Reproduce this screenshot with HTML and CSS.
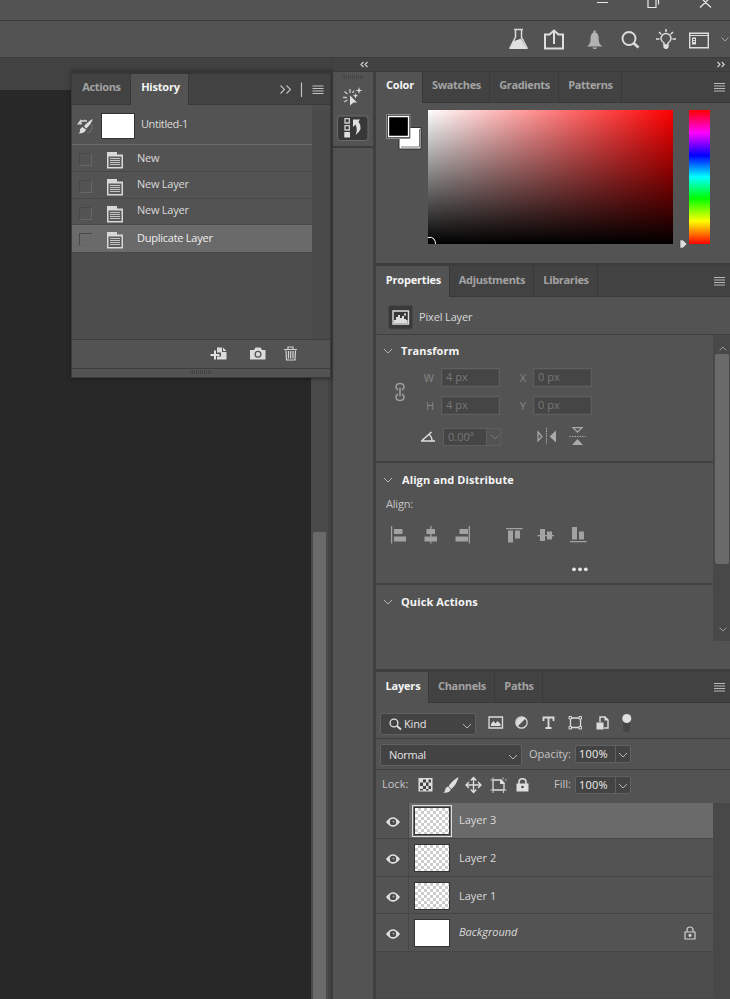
FILE: index.html
```
<!DOCTYPE html>
<html lang="en">
<head>
<meta charset="utf-8">
<title>Untitled-1</title>
<link rel="stylesheet" href="styles.css">
</head>
<body>
<svg class="defs" aria-hidden="true">
  <symbol id="menu" viewBox="0 0 11 9"><path d="M0 .5h11M0 3h11M0 5.5h11M0 8h11" stroke="#b8b8b8" stroke-width="1.2"/></symbol>
  <symbol id="down" viewBox="0 0 10 6"><path d="M1 1l4 4 4-4" fill="none" stroke="#b4b4b4" stroke-width="1"/></symbol>
  <symbol id="doc" viewBox="0 0 16 18"><path d="M0 1h10v2.500H16v14H0V1z" fill="#d8d8d8"/><path d="M1.500 5.500h13v10.500h-13z" fill="#5b5b5b"/><path d="M3 7.500h10M3 9.500h10M3 11.500h10M3 13.500h10" stroke="#c4c4c4"/></symbol>
  <symbol id="eye" viewBox="0 0 14 10"><path d="M0 5Q3.500.2 7 .2T14 5Q10.500 9.800 7 9.800T0 5z" fill="#e2e2e2"/><circle cx="7" cy="4.900" r="3.200" fill="#4b4b4b"/><circle cx="7.500" cy="4.400" r="1" fill="#a0a0a0"/></symbol>
</svg>
<div class="app">
  <header class="titlebar">
    <svg width="140" height="20" viewBox="590 0 140 20" fill="none" stroke="#e8e8e8" stroke-width="1.200"><path d="M597 2.500h11M648 -1v8.500h8V-1M651 -1h7.500V4.500M700 -3l11 10.500M711 -3l-11 10.500"/></svg>
  </header>
  <div class="options">
    <svg width="36" height="36" viewBox="500 21 36 36"><path d="M514 29.500h9M515.500 30v7l-5.500 11h17l-5.500-11v-7" fill="none" stroke="#d8d8d8" stroke-width="1.500"/><path d="M513 41.500l8-3 6 10.500h-17z" fill="#e0e0e0"/></svg>
    <svg width="38" height="36" viewBox="536 21 38 36" fill="none" stroke="#dedede" stroke-width="2"><path d="M550 34.500h-5V48.500h18V34.500h-5M554 44V31M549.500 34.500l4.500-4 4.500 4"/></svg>
    <svg width="38" height="36" viewBox="574 21 38 36" fill="#b2b2b2"><path d="M587 46.500q3.500-2.500 3.500-7 0-6.500 3-7V30.500h2.200v2q3 .5 3 7 0 4.500 3.800 7z"/><path d="M592.500 47.500h4.500l-1 1.500h-2.500z"/></svg>
    <svg width="36" height="36" viewBox="612 21 36 36" fill="none" stroke="#dedede" stroke-width="1.900"><circle cx="629" cy="38.500" r="6.500"/><path d="M633.500 43l5 4.500" stroke-width="2.600"/></svg>
    <svg width="36" height="36" viewBox="648 21 36 36" fill="none" stroke="#dedede" stroke-width="1.500"><path d="M664 45v-2q-3-2-3-4.500a5 5 0 0 1 10 0q0 2.500-3 4.500v2zM666 29v3M656 39h3.500M672.500 39h3.500M659 32l2.300 2.200M673 32l-2.300 2.200"/><path d="M663.500 45h5v2.500l-1.500 1.500h-2l-1.500-1.500z" fill="#dedede" stroke="none"/></svg>
    <svg width="30" height="36" viewBox="684 21 30 36" fill="none" stroke="#dedede" stroke-width="1.400"><path d="M689.700 33.200h18.600v14.600h-18.600z"/><path d="M690 35.500h18" stroke-width="1"/><path d="M692 37.500h4v7h-4z" fill="#dedede" stroke="none"/><path d="M693 39.500h2M693 41.500h2" stroke="#555" stroke-width="1"/></svg>
    <svg width="16" height="36" viewBox="714 21 16 36" fill="none" stroke="#a0a0a0"><path d="M721.500 37.500l3.500 3.500 3.500-3.500"/></svg>
  </div>
  <main class="work">
    <section class="document">
      <div class="doc-tabs"></div>
      <div class="doc-body"><div class="canvas"></div><div class="doc-scroll"><div class="doc-thumb"></div></div></div>
      <div class="history">
        <div class="history-top"></div>
        <div class="tabs">
          <span class="tab t-actions">Actions</span><span class="tab on t-history">History</span>
          <svg class="history-tools" width="52" height="30" viewBox="275 74 52 30" fill="none" stroke="#c2c2c2"><path d="M280.500 85.500l4 4-4 4M286.500 85.500l4 4-4 4" stroke-width="1.100"/><path d="M301.500 82.500v14.500M312.500 86h11M312.500 88.500h11M312.500 91h11M312.500 93.500h11" stroke-width="1.200"/></svg>
        </div>
        <div class="history-body">
          <div class="history-list">
            <div class="snapshot">
              <svg width="29" height="39" viewBox="72 105 29 39"><path d="M77 124.500l4-5.500 1 5.500zM81 120.500q4-1.500 6 0" fill="#d0d0d0"/><path d="M80.500 121h6.500" stroke="#d0d0d0" stroke-width="1.500"/><path d="M93 119q-6 3-9 7.500l2.500 2q4.500-4 6.500-9.500z" fill="#dcdcdc"/><path d="M82.500 127l3.500 2.500q-1 4-7.500 4 2-1.500 1.500-3.500 0-2 2.500-3z" fill="#dcdcdc"/><path d="M92 125q1 6-5 8" fill="none" stroke="#aaa" stroke-dasharray="1 1.500"/></svg>
              <div class="snap-thumb"></div><span class="lbl">Untitled-1</span>
            </div>
            <div class="state first"><i class="check"></i><svg class="docicon"><use href="#doc"/></svg><span class="lbl">New</span></div>
            <div class="state"><i class="check"></i><svg class="docicon"><use href="#doc"/></svg><span class="lbl">New Layer</span></div>
            <div class="state short"><i class="check"></i><svg class="docicon"><use href="#doc"/></svg><span class="lbl">New Layer</span></div>
            <div class="state active"><i class="check"></i><svg class="docicon"><use href="#doc"/></svg><span class="lbl">Duplicate Layer</span></div>
          </div>
          <div class="history-scroll"></div>
        </div>
        <div class="history-foot">
          <svg width="130" height="27" viewBox="200 340 130 27"><path d="M217 347.500h5v4.500h4.500v7.500H217v-3h4v-4h-4z" fill="#dcdcdc"/><path d="M223 347.500l3.500 3.500H223z" fill="#dcdcdc"/><path d="M210.500 355h9M215 350.500v9" stroke="#e2e2e2" stroke-width="2"/><path d="M250 350h4l1.500-2.500h5L262 350h3.500v9.500H250z" fill="#dcdcdc"/><circle cx="258" cy="354.300" r="2.900" fill="none" stroke="#535353" stroke-width="1.300"/><path d="M284 349.500h13M288 349v-2h5v2M286 350.500l.5 9.500h8.500l.5-9.500M288.500 351v7.500M290.700 351v7.500M293 351v7.500" fill="none" stroke="#d2d2d2" stroke-width="1.200"/></svg>
        </div>
        <div class="grip"><i></i></div>
      </div>
    </section>
    <section class="dock">
      <div class="dock-head">
        <svg width="398" height="13" viewBox="332 58 398 13" fill="none" stroke="#d0d0d0" stroke-width="1.200"><path d="M363.500 62l-2.500 2.500 2.500 2.500M367.500 62l-2.500 2.500 2.500 2.500M717.500 62l2.500 2.500-2.500 2.500M721.700 62l2.500 2.500-2.500 2.500"/></svg>
      </div>
      <div class="dock-cols">
        <aside class="strip">
          <div class="strip-group">
            <svg width="40" height="74" viewBox="333 72 40 74"><path d="M342 77h22" stroke="#444" stroke-width="4" stroke-dasharray="1 1"/><path d="M350 95.500l7 7h-3.500l-3.500 3z" fill="#e0e0e0"/><path d="M343 97.500h4M344 102l3.500-2M344.500 91.500l3 2.500M350 89v4M354 90.500l-1.500 2.500" stroke="#c4c4c4" stroke-width="1.400"/><path d="M359 87l.8 2.700 2.700.8-2.700.8-.8 2.700-.8-2.700-2.700-.8 2.700-.8zM355.500 93l.7 2 2 .7-2 .7-.7 2-.7-2-2-.7 2-.7z" fill="#dcdcdc"/><rect x="337.500" y="116" width="30.500" height="24.500" rx="3" fill="#383838" stroke="#6c6c6c"/><path d="M345 118.700h4.300v4.300H345zM345 125.700h4.300v4.300H345z" fill="none" stroke="#d0d0d0" stroke-width="1.300"/><path d="M344.300 132h5.700v5.500h-5.700zM353 119.500h7l-1.500 2.200q5.500 7-3 13.300 2.500-5.500 0-10.500l-2.500 2.500z" fill="#e0e0e0"/></svg>
          </div>
        </aside>
        <div class="panels">
          <section class="panel color">
            <div class="tabs"><span class="tab on w47">Color</span><span class="tab w67">Swatches</span><span class="tab w69">Gradients</span><span class="tab w63">Patterns</span><svg class="menu"><use href="#menu"/></svg></div>
            <div class="picker">
              <svg width="52" height="150" viewBox="376 102 52 150"><path d="M398.500 126h23v22.500h-23z" fill="#333"/><path d="M399.500 127h21v20.500h-21z" fill="#fff"/><path d="M401 146h18.500v-18" fill="none" stroke="#777"/><path d="M386.500 113.500h23.500v24h-23.500z" fill="#2d2d2d" stroke="#888"/><path d="M388.500 115.500h20v20h-20z" fill="#000" stroke="#fff" stroke-width="1.300"/></svg>
              <div class="field"><svg width="10" height="9" viewBox="0 0 10 9"><path d="M0 2.500q4-1 6 1.500 1.500 2 1.500 5" fill="none" stroke="#fff"/></svg></div>
              <svg class="hue-arrow" width="9" height="10" viewBox="0 0 9 10"><path d="M1 1h3l4 4-4 4H1z" fill="#ddd" stroke="#444" stroke-width=".6"/></svg>
              <div class="hue"></div>
            </div>
          </section>
          <section class="panel props">
            <div class="tabs"><span class="tab on w74">Properties</span><span class="tab w84">Adjustments</span><span class="tab w64">Libraries</span><svg class="menu"><use href="#menu"/></svg></div>
            <div class="kindrow"><svg width="43" height="36" viewBox="376 297 43 36"><rect x="388.500" y="304.500" width="24" height="23.500" rx="2" fill="#393939" stroke="#484848"/><path d="M393 310h15.500v13H393z" fill="none" stroke="#dedede" stroke-width="1.400"/><path d="M394 322v-3h2v-3h2v-2h2v3h2v-2h2v3h2v1h1.500v3zM404 312.500h2v2h-2z" fill="#dedede"/></svg><span class="lbl">Pixel Layer</span></div>
            <div class="props-body">
              <div class="props-content">
                <div class="group transform">
                  <div class="heading"><svg class="down"><use href="#down"/></svg><b>Transform</b></div>
                  <div class="tgrid">
                    <svg class="link" width="12" height="20" viewBox="0 0 12 20" fill="none" stroke="#999" stroke-width="1.700"><path d="M4 8Q2 7 2 5q0-3.500 4-3.500T10 5q0 2-2 3M4 12q-2 1-2 3 0 3.500 4 3.500t4-3.500q0-2-2-3M6 5.500v9"/></svg>
                    <span class="dim">W</span><span class="input">4 px</span><span class="dim">X</span><span class="input">0 px</span>
                    <span class="dim">H</span><span class="input">4 px</span><span class="dim">Y</span><span class="input">0 px</span>
                  </div>
                  <div class="angle">
                    <svg width="67" height="20" viewBox="376 427 67 20" fill="none" stroke="#dedede" stroke-width="1.500"><path d="M421 441h14M421.500 441l10-9M429 434.500q3 2 3 6.500"/></svg>
                    <span class="angle-box"><span class="angle-val">0.00º</span><svg width="10" height="6" opacity=".35"><use href="#down"/></svg></span>
                    <svg width="90" height="22" viewBox="501 426 90 22"><path d="M538 432l4 4.500-4 4.500z" fill="none" stroke="#aaa" stroke-width="1.200"/><path d="M556 430.500v12l-6.500-6z" fill="#aaa"/><path d="M546.500 428v16" stroke="#aaa" stroke-dasharray="1.500 1"/><path d="M573 427.700h9l-4.500 4.500z" fill="none" stroke="#aaa" stroke-width="1.200"/><path d="M572 445h11l-5.500-6z" fill="#aaa"/><path d="M569.500 436.500h16" stroke="#aaa" stroke-dasharray="1.500 1"/></svg>
                  </div>
                </div>
                <div class="group align">
                  <div class="heading"><svg class="down"><use href="#down"/></svg><b>Align and Distribute</b></div>
                  <div class="align-label">Align:</div>
                  <svg class="align-icons" width="221" height="62" viewBox="376 520 221 62" fill="#a2a2a2"><path d="M391 526h1.200v17.500H391zM394 529h8.500v5H394zM394 536.500h12v5h-12zM430.200 526h1.300v17.500h-1.300zM426.500 529h8.500v5h-8.500zM424.500 536.500h12.500v5h-12.500zM468.700 526h1.300v17.500h-1.300zM459.500 529h8.500v5h-8.500zM455.500 536.500H468v5h-12.500zM506 528h16.500v1.200H506zM508 530.500h5v12h-5zM515 530.500h5v8h-5zM537.500 535h16.500v1.200h-16.500zM540 529h5v12h-5zM547 531.500h5v8h-5zM570 541h16.500v1.200H570zM572 527h5v12.500h-5zM579 531.500h5v8h-5z"/><g fill="#e5e5e5"><circle cx="574" cy="569.300" r="1.900"/><circle cx="580" cy="569.300" r="1.900"/><circle cx="585.800" cy="569.300" r="1.900"/></g></svg>
                </div>
                <div class="group quick">
                  <div class="heading"><svg class="down"><use href="#down"/></svg><b>Quick Actions</b></div>
                </div>
              </div>
              <div class="props-scroll"><svg class="up" width="8" height="5" viewBox="0 0 8 5"><path d="M.5 4.500L4 1l3.500 3.500" fill="none" stroke="#999"/></svg><div class="props-thumb"></div><svg width="8" height="5" viewBox="0 0 8 5"><path d="M.5.5L4 4 7.500.5" fill="none" stroke="#999"/></svg></div>
            </div>
          </section>
          <section class="panel layers">
            <div class="tabs"><span class="tab on w52">Layers</span><span class="tab w66">Channels</span><span class="tab w48">Paths</span><svg class="menu"><use href="#menu"/></svg></div>
            <div class="filter">
              <div class="select kind"><svg width="13" height="13" viewBox="0 0 13 13" fill="none" stroke="#ddd" stroke-width="1.400"><circle cx="5" cy="5" r="3.900"/><path d="M8 8l4 3.500" stroke-width="2"/></svg><span>Kind</span><svg class="down"><use href="#down"/></svg></div>
              <svg width="160" height="34" viewBox="476 703 160 34"><path d="M489 717h13.500v11H489z" fill="none" stroke="#dcdcdc" stroke-width="1.300"/><path d="M491 726v-2l2.500-3 2 2.500 2-2.500 3 3v2z" fill="#dcdcdc"/><circle cx="521.500" cy="722.500" r="5.700" fill="none" stroke="#dcdcdc" stroke-width="1.200"/><path d="M517.500 726.500a5.700 5.700 0 0 1 8-8z" fill="#dcdcdc"/><path d="M543.500 721v-3.500h10v3.500M548.500 717.500v10.500M545.500 728h6" fill="none" stroke="#dcdcdc" stroke-width="1.800"/><path d="M570.500 718h10v9.500h-10z" fill="none" stroke="#dcdcdc" stroke-width="1.300"/><g fill="#535353" stroke="#dcdcdc"><path d="M569 716.500h2.500v2.500H569zM579 716.500h2.500v2.500H579zM569 726.500h2.500v2.500H569zM579 726.500h2.500v2.500H579z"/></g><path d="M600 722v-5h5l3 3v8h-4" fill="none" stroke="#dcdcdc" stroke-width="1.400"/><path d="M604.500 716.500v4h4M596.500 722.500h7v7h-7z" fill="#dcdcdc"/><rect x="622.500" y="714" width="8.500" height="19" rx="4.200" fill="#454545" stroke="#606060" stroke-width=".6"/><circle cx="626.800" cy="718.500" r="4.500" fill="#e0e0e0"/></svg>
            </div>
            <div class="blend">
              <div class="select mode"><span>Normal</span><svg class="down"><use href="#down"/></svg></div>
              <span class="side opacity">Opacity:</span><span class="percent"><span>100%</span><svg class="down"><use href="#down"/></svg></span>
            </div>
            <div class="locks">
              <span class="side">Lock:</span>
              <svg width="135" height="30" viewBox="411 770 135 30"><path d="M418.500 778h14v13.500h-14z" fill="#dedede"/><path d="M423 779.500h3v3h-3zM428.500 779.500h2.500v3h-2.500zM420 782.500h3v3.500h-3zM426 782.500h2.500v3.500H426zM423 786h3v3h-3zM428.500 786h2.500v3h-2.500zM420 789h3v1.500h-3zM426 789h2.500v1.500H426z" fill="#444"/><path d="M458.500 777q-7 4-10 9.500l3 2.500q5.500-5 7-12zM447.800 786.500l3 2.800q-1 4-7.500 3.500 2-1.500 2-3.500 0-1.800 2.500-2.800z" fill="#dedede"/><path d="M467 785h13M473.500 778v14M470.700 780.500l2.800-3 2.800 3M470.700 789.500l2.800 3 2.800-3M469 782l-3 3 3 3M478 782l3 3-3 3" fill="none" stroke="#dedede" stroke-width="1.400"/><path d="M493 780h8l3 3v7h-11z" fill="none" stroke="#dedede" stroke-width="1.300"/><path d="M490.500 780h2M493 777.500v2M503 777.500v2M490.500 790h2M504 790h2.500M493 791v2M503.500 791v2M505 780h1.500" stroke="#ccc"/><path d="M500 779v5h5z" fill="#dedede"/><path d="M516.500 783.500h12v8h-12z" fill="#dedede"/><path d="M519 784v-2q0-3.300 3.500-3.300T526 782v2" fill="none" stroke="#dedede" stroke-width="1.600"/><circle cx="522.500" cy="787" r="1.300" fill="#444"/></svg>
              <span class="side fill">Fill:</span><span class="percent"><span>100%</span><svg class="down"><use href="#down"/></svg></span>
            </div>
            <div class="layer-area">
              <div class="layer-list">
                <div class="layer current"><span class="vis"><svg class="eye"><use href="#eye"/></svg></span><span class="thumb checker"></span><span class="lbl">Layer 3</span></div>
                <div class="layer"><span class="vis"><svg class="eye"><use href="#eye"/></svg></span><span class="thumb checker"></span><span class="lbl">Layer 2</span></div>
                <div class="layer short"><span class="vis"><svg class="eye"><use href="#eye"/></svg></span><span class="thumb checker"></span><span class="lbl">Layer 1</span></div>
                <div class="layer"><span class="vis"><svg class="eye"><use href="#eye"/></svg></span><span class="thumb"></span><span class="lbl bg">Background</span><svg class="padlock" width="12" height="14" viewBox="0 0 12 14" fill="none" stroke="#d0d0d0" stroke-width="1.200"><path d="M1 6h10v7H1zM3 6V4q0-3 3-3t3 3v2"/><circle cx="6" cy="9.300" r="1" fill="#eee"/></svg></div>
              </div>
              <div class="layer-scroll"></div>
            </div>
          </section>
        </div>
      </div>
    </section>
  </main>
</div>
</body>
</html>
```
FILE: styles.css
```
* { box-sizing: border-box; }
body { margin: 0; background: #535353; color: #dcdcdc; font: 11px/14px "Open Sans", "Noto Sans", sans-serif; }
svg { display: block; flex: none; }
.defs { position: absolute; width: 0; height: 0; }
.app { width: 730px; height: 999px; display: flex; flex-direction: column; overflow: hidden; }
.titlebar { height: 21px; display: flex; justify-content: flex-end; border-bottom: 1px solid #3d3d3d; flex: none; }
.options { height: 37px; display: flex; justify-content: flex-end; border-bottom: 1px solid #3b3b3b; flex: none; }
.work { flex: 1; display: flex; min-height: 0; }

.document { position: relative; width: 332px; display: flex; flex-direction: column; background: #424242; border-right: 1px solid #393939; }
.doc-tabs { height: 32px; background: #424242; }
.doc-body { flex: 1; display: flex; }
.canvas { width: 311px; background: #282828; }
.doc-scroll { width: 18px; background: #4a4a4a; padding: 442px 2px 0 2px; border-right: 1px solid #444; }
.doc-thumb { height: 100%; background: #6a6a6a; border-radius: 2px 2px 0 0; }

.tabs { display: flex; height: 31px; background: #424242; border-bottom: 1px solid #393939; flex: none; }
.tab { display: block; height: 30px; padding: 7px 0 0 1px; text-align: center; font-weight: 700; letter-spacing: -.35px; color: #a3a3a3; border-right: 1px solid #393939; white-space: nowrap; }
.tab.on { height: 31px; background: #535353; color: #f5f5f5; letter-spacing: -.2px; padding-left: 2px; }
.color .tab, .history .tab { padding-top: 6px; }
.w47 { width: 47px; } .w67 { width: 67px; } .w69 { width: 69px; } .w63 { width: 63px; }
.w74 { width: 74px; } .w84 { width: 84px; } .w64 { width: 64px; }
.w52 { width: 53px; } .w66 { width: 66px; } .w48 { width: 48px; }
.menu { width: 11px; height: 9px; margin: 11px 5px 0 auto; }
.lbl { color: #dadada; white-space: nowrap; }
.down { width: 10px; height: 6px; }

.history { position: absolute; left: 71px; top: 11px; width: 260px; height: 309px; display: flex; flex-direction: column; background: #535353; border: 1px solid #3a3a3a; box-shadow: 0 1px 4px rgba(0, 0, 0, .35); }
.history-top { height: 4px; background: #363636; }
.t-actions { width: 59px; }
.t-history { width: 58px; }
.history-tools { margin-left: auto; margin-right: 3px; }
.history-body { display: flex; height: 234px; background: #4d4d4d; }
.history-list { width: 240px; }
.history .lbl { letter-spacing: -.25px; }
.snapshot { display: flex; height: 40px; background: #535353; border-bottom: 1px solid #6a6a6a; }
.snap-thumb { width: 34px; height: 26px; margin: 8px 6px 0 0; background: #fff; border: 1px solid #333; }
.snapshot .lbl { margin-top: 12px; letter-spacing: -.4px; }
.state { display: flex; height: 27px; background: #535353; border-bottom: 1px solid #484848; }
.state.short { height: 26px; }
.state.active { height: 28px; background: #6a6a6a; }
.check { width: 13px; height: 13px; margin: 8px 15px 0 7px; border: 1px solid; border-color: #484848 #666 #666 #484848; }
.docicon { width: 16px; height: 18px; margin: 6px 14px 0 0; }
.state .lbl { margin-top: 5px; }
.state.short .lbl { margin-top: 4px; }
.state.first .lbl, .state.active .lbl { margin-top: 6px; }
.state.active .lbl { color: #eee; }
.history-scroll { flex: 1; margin-top: 5px; background: #4a4a4a; }
.history-foot { height: 29px; border-top: 1px solid #3d3d3d; display: flex; justify-content: flex-end; }
.grip { flex: 1; border-top: 1px solid #3d3d3d; }
.grip i { display: block; width: 22px; height: 4px; margin: 1px auto 0; background: repeating-linear-gradient(90deg, #444 0 1px, transparent 1px 2px); }

.dock { flex: 1; display: flex; flex-direction: column; min-width: 0; }
.dock-head { height: 14px; background: #424242; border-bottom: 1px solid #393939; }
.dock-cols { flex: 1; display: flex; }
.strip { width: 41px; border-left: 1px solid #3d3d3d; }
.strip-group { height: 76px; border-bottom: 2px solid #3d3d3d; }
.panels { flex: 1; border-left: 3px solid #3f3f3f; display: flex; flex-direction: column; }
.panel { display: flex; flex-direction: column; border-bottom: 3px solid #3d3d3d; }
.color { height: 194px; }
.picker { display: flex; }
.field { width: 245px; height: 134px; margin-top: 7px; background: linear-gradient(to bottom, transparent, #000), linear-gradient(to right, #fff, #f00); display: flex; align-items: flex-end; }
.hue-arrow { margin: 136px 1px 0 6px; }
.hue { width: 21px; height: 134px; margin-top: 7px; background: linear-gradient(#f00, #f0f 17%, #00f 34%, #0ff 50%, #0f0 66%, #ff0 83%, #f00); }

.props { height: 406px; }
.kindrow { height: 38px; display: flex; align-items: center; border-bottom: 1px solid #404040; }
.kindrow .lbl { padding-top: 3px; letter-spacing: -.15px; }
.props-body { display: flex; height: 306px; }
.props-content { width: 337px; }
.heading { display: flex; align-items: center; gap: 8px; padding-left: 7px; color: #f5f5f5; letter-spacing: .1px; }
.align .heading { gap: 9px; }
.transform { height: 128px; padding-top: 9px; border-bottom: 2px solid #424242; }
.tgrid { display: grid; grid-template-columns: 29px 29px 59px 33px 59px; grid-template-rows: 19px 19px; row-gap: 9px; padding-left: 7px; margin-top: 10px; align-items: center; }
.link { grid-row: span 2; margin: 0 0 0 11px; }
.dim { text-align: right; padding-right: 7px; color: #858585; }
.input { height: 19px; padding: 1px 0 0 4px; border: 1px solid #5e5e5e; background: #454545; color: #777; }
.tgrid .input { box-shadow: inset 0 0 0 1px #4b4b4b; }
.angle { display: flex; align-items: center; margin-top: 10px; height: 24px; }
.angle-box { display: flex; align-items: center; width: 58px; height: 18px; border: 1px solid #5e5e5e; color: #777; }
.angle-val { width: 43px; height: 16px; padding: 1px 0 0 4px; background: #454545; border-right: 1px solid #5e5e5e; margin-right: 3px; }
.align { height: 122px; padding-top: 10px; border-bottom: 2px solid #424242; }
.align-label { margin: 10px 0 0 10px; color: #c4c4c4; letter-spacing: -.2px; }
.align-icons { margin-top: 9px; }
.quick { padding-top: 10px; }
.props-scroll { flex: 1; background: #484848; padding: 11px 1px 0 2px; display: flex; flex-direction: column; }
.props-scroll svg { margin-left: 4px; }
.props-thumb { height: 210px; margin: 3px 0 63px; background: #6a6a6a; border-radius: 2px; }

.layers { flex: 1; border-bottom: 1px solid #484848; }
.filter, .blend, .locks { display: flex; }
.filter { height: 36px; border-bottom: 1px solid #404040; }
.select { display: flex; align-items: center; height: 22px; margin-left: 4px; background: #434343; border: 1px solid #606060; border-radius: 2px; color: #e4e4e4; }
.kind { width: 96px; margin-top: 10px; padding: 0 3px 0 8px; gap: 2px; letter-spacing: -.15px; }
.select .down { margin-left: auto; margin-top: 3px; }
.blend { height: 31px; border-bottom: 1px solid #404040; }
.mode { width: 142px; margin-top: 5px; padding: 0 3px 0 8px; letter-spacing: -.3px; }
.side { color: #c6c6c6; white-space: nowrap; margin-top: 8px; }
.opacity { margin-left: 7px; width: 46px; }
.percent { display: flex; align-items: center; height: 18px; margin-top: 6px; width: 56px; border: 1px solid #606060; border-radius: 2px; background: #434343; color: #eee; }
.percent > span { width: 40px; height: 16px; padding: 1px 0 0 3px; border-right: 1px solid #606060; margin-right: 2px; letter-spacing: .2px; }
.percent .down { margin-top: 2px; }
.locks { height: 33px; padding-left: 6px; }
.locks .side:first-child { width: 29px; }
.locks .side { margin-top: 7px; }
.locks .fill { width: 20px; margin: 7px 0 0 8px; }
.locks .percent { margin-left: 1px; }
.layer-area { flex: 1; display: flex; background: #4d4d4d; }
.layer-list { width: 337px; }
.layer { display: flex; height: 38px; background: #535353; border-bottom: 1px solid #454545; }
.layer.short { height: 37px; }
.layer.current { height: 36px; background: #6a6a6a; }
.vis { width: 33px; border-right: 1px solid #484848; background: #535353; }
.eye { width: 14px; height: 10px; margin: 15px 0 0 10px; }
.current .eye { margin-top: 14px; }
.thumb { width: 36px; height: 28px; margin: 5px 9px 0 5px; border: 1px solid #333; background: #fff; }
.thumb.checker { background: repeating-conic-gradient(#ccc 0 25%, #fff 0 50%) 0 0 / 6px 6px; }
.current .thumb { outline: 1px solid #ddd; outline-offset: 1px; margin-top: 4px; }
.layer .lbl { margin-top: 12px; }
.layer.current .lbl { margin-top: 10px; }
.layer .bg { margin-top: 11px; font-style: italic; }
.padlock { margin: 12px 17px 0 auto; }
.layer-scroll { flex: 1; background: #484848; }
```
